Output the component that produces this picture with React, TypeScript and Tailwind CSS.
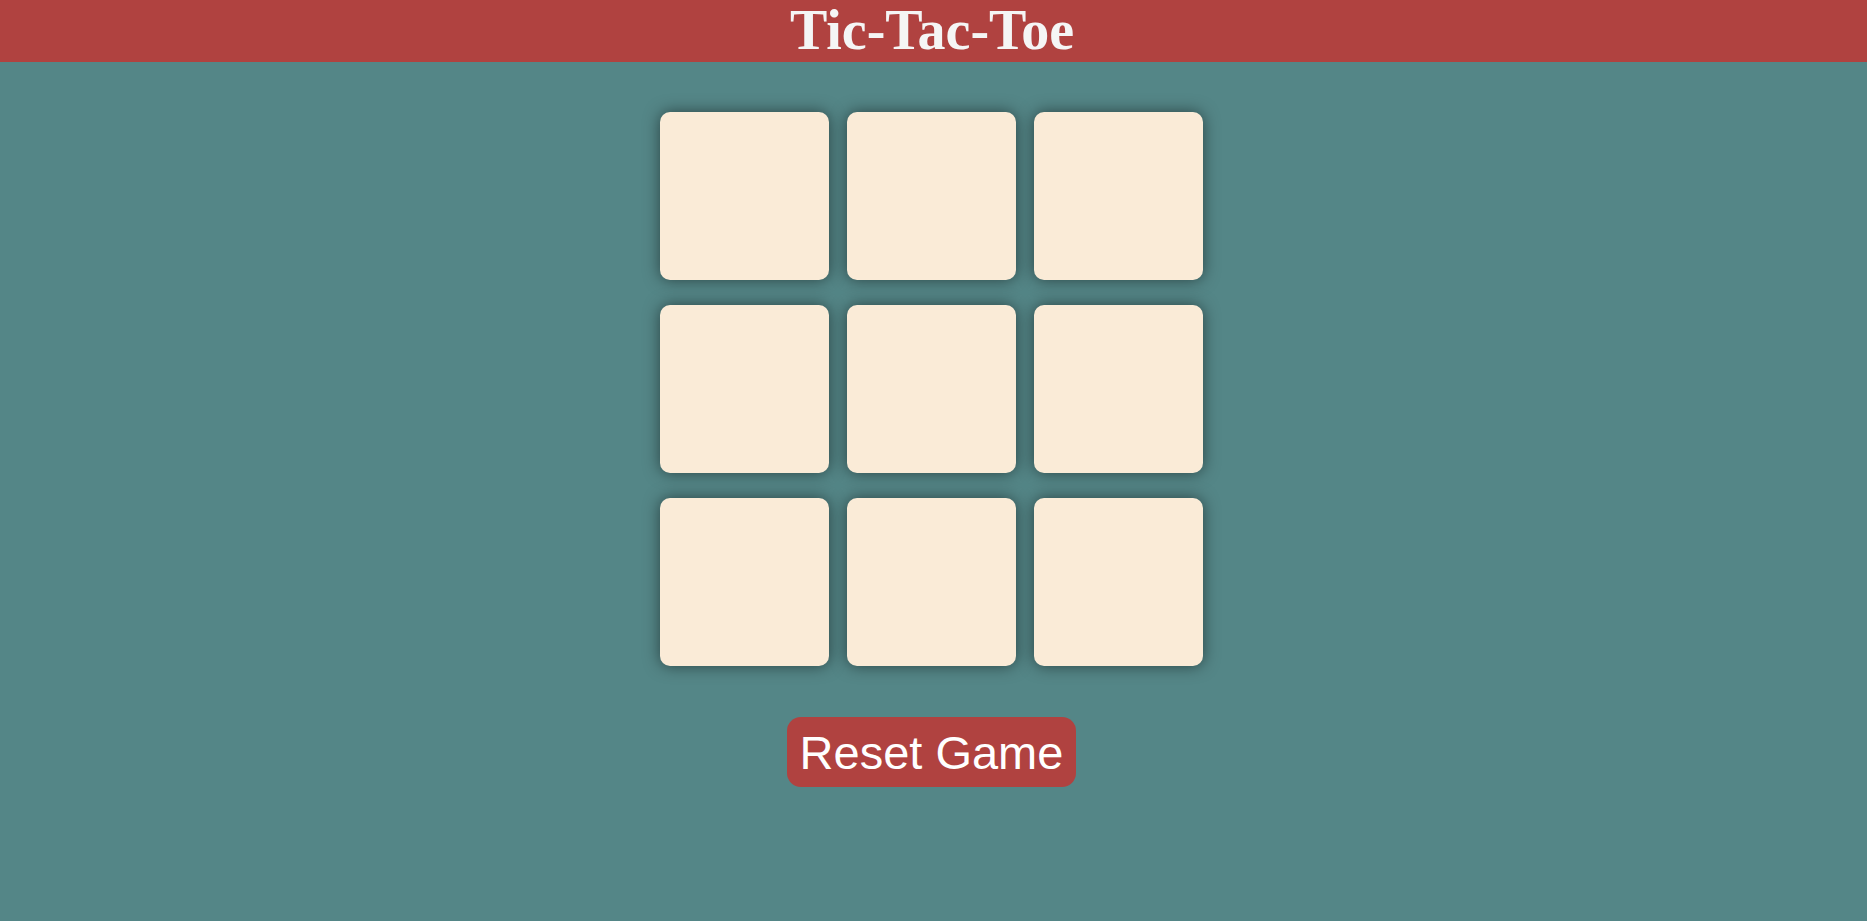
import React, { useState } from 'react';

type Cell = 'X' | 'O' | null;

const App: React.FC = () => {
  const [cells, setCells] = useState<Cell[]>(Array(9).fill(null));
  const [xTurn, setXTurn] = useState(true);

  const play = (i: number) => {
    if (cells[i]) return;
    const next = [...cells];
    next[i] = xTurn ? 'X' : 'O';
    setCells(next);
    setXTurn(!xTurn);
  };

  const reset = () => {
    setCells(Array(9).fill(null));
    setXTurn(true);
  };

  return (
    <div className="min-h-[921px] bg-[#548687] flex flex-col">
      <header className="h-[62px] bg-[#b04240] flex justify-center pr-[3px]">
        <h1 className="text-[56px] leading-[61px] font-bold text-[#f5f5f5] font-['Liberation_Serif',serif]">
          Tic-Tac-Toe
        </h1>
      </header>

      <main className="flex flex-col items-center pt-[50px] pr-[4px]">
        <div className="grid grid-cols-[169px_169px_169px] auto-rows-[168px] gap-x-[18px] gap-y-[25px]">
          {cells.map((c, i) => (
            <button
              key={i}
              onClick={() => play(i)}
              className="bg-[#faebd7] rounded-[10px] shadow-[0_0_16px_rgba(0,0,0,0.5)] text-[96px] text-[#548687] font-bold font-['Liberation_Sans',sans-serif]"
            >
              {c}
            </button>
          ))}
        </div>

        <button
          onClick={reset}
          className="mt-[51px] h-[70px] px-[13px] bg-[#b04240] rounded-[14px] text-white text-[47px] leading-none font-['Liberation_Sans',sans-serif]"
        >
          Reset Game
        </button>
      </main>
    </div>
  );
};

export default App;
